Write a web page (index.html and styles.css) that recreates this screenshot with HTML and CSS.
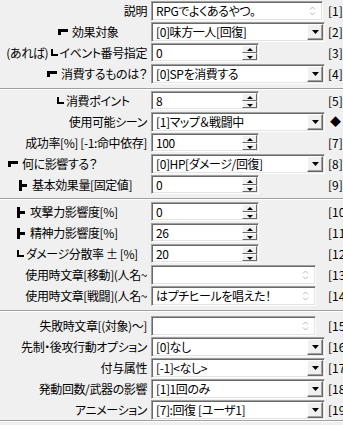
FILE: index.html
```html
<!DOCTYPE html>
<html lang="ja">
<head>
  <meta charset="UTF-8" />
  <meta name="viewport" content="width=device-width, initial-scale=1.0" />
  <title>スキル設定</title>
  <link rel="stylesheet" href="styles.css">
</head>
<body>
  <div class="panel">

    <div class="grp g1">
      <div class="row">
        <span class="lbl">説明</span>
        <div class="field memo wide">
          <span class="txt">RPGでよくあるやつ。</span>
          <svg class="sb" width="7" height="14" viewBox="0 0 7 14"><path d="M1 5.5L3.5 3L6 5.5M1 8.5L3.5 11L6 8.5" fill="none" stroke="#b4b8c0"/></svg>
        </div>
        <span class="tag">[1]</span>
      </div>
      <div class="row">
        <span class="lbl left p58"><i class="mk tl"></i>効果対象</span>
        <div class="field sel"><span class="txt">[0]味方一人[回復]</span><span class="drop"><svg width="7" height="4" viewBox="0 0 7 4"><path d="M0 0h7L3.5 4z"/></svg></span></div>
        <span class="tag">[2]</span>
      </div>
      <div class="row">
        <span class="lbl">(あれば) <i class="mk bl"></i>イベント番号指定</span>
        <div class="field spin"><span class="txt">0</span><span class="btns"><span class="sbtn up"></span><span class="sbtn dn"></span></span></div>
        <span class="tag">[3]</span>
      </div>
      <div class="row">
        <span class="lbl"><i class="mk tl"></i>消費するものは？</span>
        <div class="field sel"><span class="txt">[0]SPを消費する</span><span class="drop"><svg width="7" height="4" viewBox="0 0 7 4"><path d="M0 0h7L3.5 4z"/></svg></span></div>
        <span class="tag">[4]</span>
      </div>
    </div>
    <hr class="sep">

    <div class="grp g2">
      <div class="row">
        <span class="lbl left p57"><i class="mk bl"></i>消費ポイント</span>
        <div class="field spin"><span class="txt">8</span><span class="btns"><span class="sbtn up"></span><span class="sbtn dn"></span></span></div>
        <span class="tag">[5]</span>
      </div>
      <div class="row">
        <span class="lbl">使用可能シーン</span>
        <div class="field sel"><span class="txt">[1]マップ＆戦闘中</span><span class="drop"><svg width="7" height="4" viewBox="0 0 7 4"><path d="M0 0h7L3.5 4z"/></svg></span></div>
        <span class="tag dia">◆</span>
      </div>
      <div class="row">
        <span class="lbl">成功率[%] [-1:命中依存]</span>
        <div class="field spin"><span class="txt">100</span><span class="btns"><span class="sbtn up"></span><span class="sbtn dn"></span></span></div>
        <span class="tag">[7]</span>
      </div>
      <div class="row">
        <span class="lbl left p8"><i class="mk tl"></i>何に影響する？</span>
        <div class="field sel"><span class="txt">[0]HP[ダメージ/回復]</span><span class="drop"><svg width="7" height="4" viewBox="0 0 7 4"><path d="M0 0h7L3.5 4z"/></svg></span></div>
        <span class="tag">[8]</span>
      </div>
      <div class="row">
        <span class="lbl left p19"><i class="mk lt"></i>基本効果量[固定値]</span>
        <div class="field spin"><span class="txt">0</span><span class="btns"><span class="sbtn up"></span><span class="sbtn dn"></span></span></div>
        <span class="tag">[9]</span>
      </div>
    </div>
    <hr class="sep">

    <div class="grp g3">
      <div class="row">
        <span class="lbl left p17"><i class="mk lt"></i>攻撃力影響度[%]</span>
        <div class="field spin"><span class="txt">0</span><span class="btns"><span class="sbtn up"></span><span class="sbtn dn"></span></span></div>
        <span class="tag">[10]</span>
      </div>
      <div class="row">
        <span class="lbl left p17"><i class="mk lt"></i>精神力影響度[%]</span>
        <div class="field spin"><span class="txt">26</span><span class="btns"><span class="sbtn up"></span><span class="sbtn dn"></span></span></div>
        <span class="tag">[11]</span>
      </div>
      <div class="row">
        <span class="lbl left p17"><i class="mk bl"></i>ダメージ分散率 ± [%]</span>
        <div class="field spin"><span class="txt">20</span><span class="btns"><span class="sbtn up"></span><span class="sbtn dn"></span></span></div>
        <span class="tag">[12]</span>
      </div>
      <div class="row">
        <span class="lbl">使用時文章[移動](人名~</span>
        <div class="field memo">
          <span class="txt"></span>
          <svg class="sb" width="7" height="14" viewBox="0 0 7 14"><path d="M1 5.5L3.5 3L6 5.5M1 8.5L3.5 11L6 8.5" fill="none" stroke="#b4b8c0"/></svg>
        </div>
        <span class="tag">[13]</span>
      </div>
      <div class="row">
        <span class="lbl">使用時文章[戦闘](人名~</span>
        <div class="field memo">
          <span class="txt">はプチヒールを唱えた！</span>
          <svg class="sb" width="7" height="14" viewBox="0 0 7 14"><path d="M1 5.5L3.5 3L6 5.5M1 8.5L3.5 11L6 8.5" fill="none" stroke="#b4b8c0"/></svg>
        </div>
        <span class="tag">[14]</span>
      </div>
    </div>
    <hr class="sep">

    <div class="grp g4">
      <div class="row">
        <span class="lbl">失敗時文章[(対象)〜]</span>
        <div class="field memo">
          <span class="txt"></span>
          <svg class="sb" width="7" height="14" viewBox="0 0 7 14"><path d="M1 5.5L3.5 3L6 5.5M1 8.5L3.5 11L6 8.5" fill="none" stroke="#b4b8c0"/></svg>
        </div>
        <span class="tag">[15]</span>
      </div>
      <div class="row">
        <span class="lbl">先制・後攻行動オプション</span>
        <div class="field sel"><span class="txt">[0]なし</span><span class="drop"><svg width="7" height="4" viewBox="0 0 7 4"><path d="M0 0h7L3.5 4z"/></svg></span></div>
        <span class="tag">[16]</span>
      </div>
      <div class="row">
        <span class="lbl">付与属性</span>
        <div class="field sel"><span class="txt">[-1]&lt;なし&gt;</span><span class="drop"><svg width="7" height="4" viewBox="0 0 7 4"><path d="M0 0h7L3.5 4z"/></svg></span></div>
        <span class="tag">[17]</span>
      </div>
      <div class="row">
        <span class="lbl">発動回数/武器の影響</span>
        <div class="field sel"><span class="txt">[1]1回のみ</span><span class="drop"><svg width="7" height="4" viewBox="0 0 7 4"><path d="M0 0h7L3.5 4z"/></svg></span></div>
        <span class="tag">[18]</span>
      </div>
      <div class="row">
        <span class="lbl">アニメーション</span>
        <div class="field sel"><span class="txt">[7]:回復 [ユーザ1]</span><span class="drop"><svg width="7" height="4" viewBox="0 0 7 4"><path d="M0 0h7L3.5 4z"/></svg></span></div>
        <span class="tag">[19]</span>
      </div>
    </div>
    <hr class="sep">

  </div>
</body>
</html>
```

FILE: styles.css
```css
* { box-sizing: border-box; }
body { margin: 0; background: #f0f0f0; color: #000; font-family: "Noto Sans CJK JP", sans-serif; font-size: 12px; font-feature-settings: "palt"; letter-spacing: -0.4px; overflow: hidden; }
.panel { width: 343px; height: 425px; overflow: hidden; }

.grp { display: flex; flex-direction: column; }
.g1 { padding-bottom: 4px; }
.g2 { padding-bottom: 3px; }
.g3 { padding-top: 1px; padding-bottom: 4px; }
.g4 { padding-top: 3px; }
.sep { margin: 0; height: 2px; border: 0; border-top: 1px solid #a0a0a0; border-bottom: 1px solid #fff; }

.row { display: grid; grid-template-columns: 151px 177px 1fr; height: 21px; align-items: center; }
.lbl { padding-right: 4px; text-align: right; white-space: nowrap; line-height: 21px; }
.lbl.left { text-align: left; }
.p8 { padding-left: 8px; }
.p17 { padding-left: 17px; }
.p19 { padding-left: 19px; }
.p57 { padding-left: 57px; }
.p58 { padding-left: 58px; }

.mk { display: inline-block; position: relative; margin-right: 4px; vertical-align: 0; }
.mk.tl { width: 10px; height: 6px; border-top: 3px solid #000; border-left: 3px solid #000; vertical-align: 2px; }
.mk.bl { width: 7px; height: 7px; border-bottom: 2px solid #000; border-left: 2px solid #000; vertical-align: 2px; margin-right: 2px; }
.mk.lt { width: 8px; height: 11px; border-left: 3px solid #000; vertical-align: -1px; margin-right: 5px; }
.mk.lt::after { content: ""; position: absolute; left: 0; top: 4px; width: 5px; height: 3px; background: #000; }

.tag { white-space: nowrap; line-height: 21px; letter-spacing: 0; }
.tag.dia { font-size: 11px; padding-left: 2px; }

.field { background: #fff; border: 1px solid; border-color: #a0a0a0 #fff #fff #a0a0a0; box-shadow: inset 1px 1px 0 #696969, inset -1px -1px 0 #e3e3e3; display: flex; }
.txt { flex: 1; padding-left: 4px; white-space: nowrap; overflow: hidden; }

.memo { width: 165px; height: 20px; align-items: flex-start; }
.memo.wide { width: 172px; }
.memo .txt { line-height: 16px; padding-top: 1px; }
.memo .sb { margin: 2px 6px 0 0; }

.sel { width: 174px; height: 20px; align-items: center; }
.sel .txt { line-height: 18px; }
.drop { width: 16px; height: 16px; margin: 1px 1px 1px 0; background: #f0f0f0; border: 1px solid; border-color: #fff #696969 #696969 #fff; box-shadow: inset -1px -1px 0 #a0a0a0; display: flex; align-items: center; justify-content: center; }

.spin { width: 108px; height: 19px; }
.spin .txt { line-height: 15px; padding-top: 1px; }
.btns { width: 15px; margin: 1px 1px 1px 0; display: flex; flex-direction: column; }
.sbtn { flex: 1; background: #f0f0f0; border: 1px solid; border-color: #fff #696969 #696969 #fff; position: relative; }
.sbtn::after { content: ""; position: absolute; left: 4px; top: 2px; border-left: 3px solid transparent; border-right: 3px solid transparent; }
.sbtn.up::after { border-bottom: 3px solid #000; }
.sbtn.dn::after { border-top: 3px solid #000; }
```
